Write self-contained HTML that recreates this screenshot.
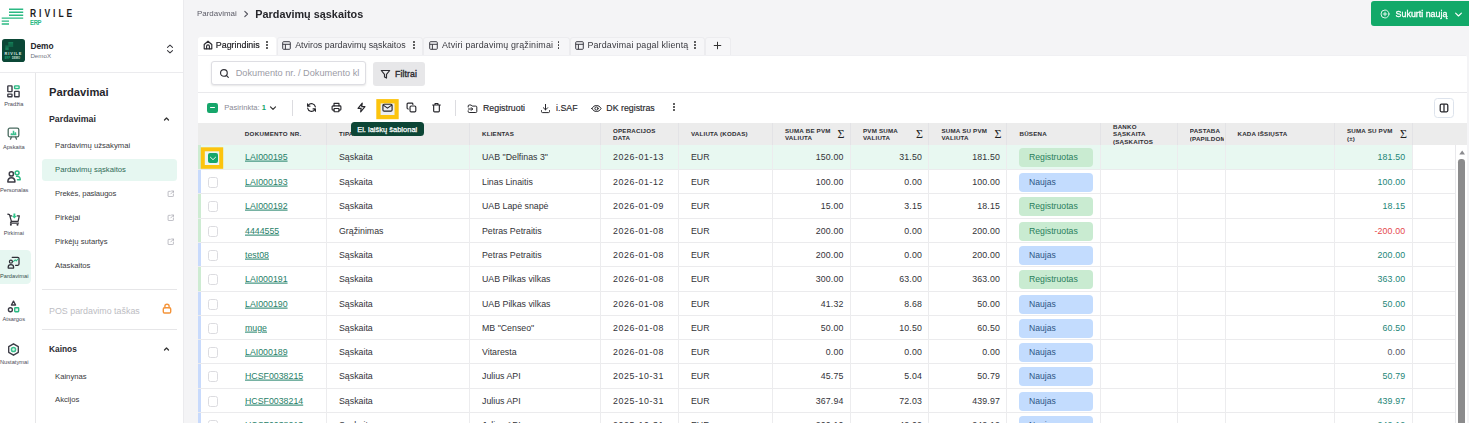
<!DOCTYPE html>
<html lang="lt"><head><meta charset="utf-8"><title>Pardavimų sąskaitos</title>
<style>
*{box-sizing:border-box}
html,body{margin:0;padding:0}
body{filter:blur(.3px);width:1469px;height:423px;overflow:hidden;position:relative;background:#f4f4f6;font-family:"Liberation Sans",sans-serif;font-size:8.9px;color:#2f2f33;line-height:1}
.abs,.left *, .top *{position:absolute}
.left{position:absolute;left:0;top:0;width:184px;height:423px;background:#fff;border-right:1px solid #ebebee}
.t{white-space:nowrap;line-height:1;transform:translateY(-50%)}
.hl{height:1px;background:#e6e6e8}
.vl{width:1px;background:#e6e6e8}
.rl{left:0;width:27.6px;text-align:center;font-size:5.7px;color:#4a4a55;white-space:nowrap;line-height:1;transform:translateY(-50%)}
.ri{left:7.3px;width:13px;height:13px}
.mi{left:55px;font-size:7.7px;color:#3a3a40}
.ext{left:166.6px;width:7.7px;height:7.7px}
.top{position:absolute;left:0;top:0;width:1469px;height:423px}
.tab{top:37px;height:18.2px;background:#f6f6f8;border:1px solid #ececef;border-bottom:none;border-radius:3px 3px 0 0}
.tab.on{background:#fff;border-color:#fff}
.tt{top:45.1px;font-size:8.9px;color:#3a3a40;white-space:nowrap;line-height:1;transform:translateY(-50%)}
.dots{width:2px;height:9px;top:41.3px}
.dots i{left:0;width:1.8px;height:1.8px;border-radius:50%;background:#333}
.panel{left:198px;top:55px;width:1268.5px;height:370px;background:#fff;border-radius:0 3px 0 0}
.tbi{top:102.4px;width:11px;height:11px;margin-left:.5px}
.tbt{top:107.8px;font-size:8.8px;color:#26262b;-webkit-text-stroke:.15px #26262b;white-space:nowrap;line-height:1;transform:translateY(-50%)}
.tbl{position:absolute;left:0;top:0;width:1469px;height:423px;overflow:hidden}
.th{position:absolute;left:198px;top:123px;width:1268.5px;height:22px;background:#ececec}
.h{position:absolute;font-size:6.2px;font-weight:bold;letter-spacing:.2px;color:#2e2e33;white-space:nowrap;line-height:6.4px;top:50%;margin-top:.4px;transform:translateY(-50%)}
.sg{position:absolute;top:50%;transform:translateY(-50%);font-family:"Liberation Serif",serif;font-size:12px;color:#222;line-height:1}
.tr{position:absolute;left:198px;width:1257.5px;border-bottom:1px solid #ebebed;background:#fff}
.tr.sel{background:linear-gradient(to right,#e8f8f1 1214px,#fff 1214px)}
.st{position:absolute;left:0;top:0;width:3px;height:100%}
.st.g{background:#cdebd2}
.st.b{background:#c8dafc}
.cb{position:absolute;left:10.5px;top:7px;width:10.5px;height:10.5px;border:1px solid #dcdce0;border-radius:2.5px;background:#fff}
.cbhl{position:absolute;left:3px;top:2px}
.cbsel{position:absolute;left:7.7px;top:5.9px;width:14.5px;height:13.8px}
.cbon{position:absolute;left:2.9px;top:1.9px;width:10.2px;height:10.2px;border-radius:2px;background:#16a66b}
.cbon svg{position:absolute;left:0;top:0}
.c{position:absolute;top:50%;transform:translateY(-50%);white-space:nowrap;line-height:1;font-size:8.8px;color:#333338;margin-top:.2px}
.lnk{left:48px;color:#1f8068;text-decoration:underline;text-underline-offset:1px;text-decoration-thickness:.7px}
.c2{left:142px}.c3{left:285px}.c4{left:416px}.c5{left:494px}
.dt{letter-spacing:.6px}
.n{text-align:right;letter-spacing:.15px}
.n1{right:612px}.n2{right:533.5px}.n3{right:455.5px}.n4{right:50.2px;color:#1c8577}
.n4.zero{color:#55555f}
.n4.neg{color:#e5484d}
.bdg{position:absolute;left:822px;top:3px;width:74px;height:18.5px;border-radius:4px;font-size:8.6px;line-height:18.8px;padding-left:10px;white-space:nowrap}
.bg{background:#c9ebd1;color:#2a805c;font-size:8.7px}
.bb{background:#c3dcfe;color:#2d5585}
.cv{position:absolute;top:145px;width:1px;height:280px;background:#ececee}
.hv{position:absolute;top:0;width:1px;height:100%;background:#e3e3e6}
.abs{position:absolute}
.tr>*:not(.st),.th>*{margin-left:-1px}

</style></head><body>
<div class="left">
<svg style="left:0;top:6px" width="26" height="22" viewBox="0 0 26 22"><g stroke="#2bb983" stroke-width="1.4" stroke-linecap="butt"><path d="M9 3.2H23.2M9 6.2H23.2M9 9.2H23.2M1.7 12.1H23.2M1.7 15.1H9M1.7 18H9"/></g></svg>
<div class="t" style="left:30.4px;top:13.5px;font-size:10px;font-weight:bold;letter-spacing:3.5px;color:#1c1c1c;transform-origin:0 50%;transform:translateY(-50%) scaleX(.85)">RIVILE</div>
<div class="t" style="left:30px;top:22.8px;font-size:6.8px;font-weight:bold;letter-spacing:-.3px;color:#2bb983;transform-origin:0 50%;transform:translateY(-50%) scaleX(.86)">ERP</div>
<div style="left:1.8px;top:39px;width:23px;height:23px;border-radius:2.8px;background:#0b4736"></div>
<svg style="left:1.8px;top:39px" width="23" height="23" viewBox="0 0 23 23"><g stroke="#188a60" stroke-width=".8"><path d="M6.300 3.500h4.900M6.300 4.700h4.900M6.300 5.900h4.900M3.300 7.100h7.900M3.300 8.300h3.400M3.300 9.500h3.400M3.300 10.500h3.400"/></g></svg>
<div class="t" style="left:4.6px;top:53.600px;font-size:3.900px;font-weight:bold;letter-spacing:.85px;color:#dcebe5">RIVILE</div>
<div class="t" style="left:4.700px;top:59px;font-size:2.600px;font-weight:bold;letter-spacing:.15px;color:#23a877">ERP <span style="position:static;color:#cfe3dc;margin-left:.6px">DEMO</span></div>
<div class="t" style="left:30.4px;top:45.6px;font-size:8.4px;font-weight:bold;color:#26262b">Demo</div>
<div class="t" style="left:30.4px;top:55.8px;font-size:6.2px;color:#6d7280">DemoX</div>
<svg style="left:165.500px;top:44.300px" width="8" height="10" viewBox="0 0 8 10"><path d="M1.500 3.300L4 1.100l2.500 2.200M1.500 6.700L4 8.900l2.500-2.200" fill="none" stroke="#3a3a40" stroke-width="1.100" stroke-linecap="round" stroke-linejoin="round"/></svg>
<div class="hl" style="left:0;top:72px;width:183px;background:#ebebee"></div>
<div class="vl" style="left:35px;top:73px;height:350px"></div>

<!-- rail -->
<div style="left:0;top:250px;width:31px;height:34px;background:#e6f7f1;border-radius:0 4.500px 4.500px 0"></div>
<svg class="ri" style="top:84.500px" viewBox="0 0 13 13"><g fill="none" stroke="#3c3c46" stroke-width="1.400"><rect x=".8" y=".9" width="4.200" height="5.700" rx=".5"/><rect x=".8" y="9.100" width="4.200" height="2.700" rx=".5"/><rect x="7.600" y="6.400" width="4.500" height="5.400" rx=".5"/><rect x="7.600" y=".9" width="4.500" height="2.700" rx=".5" stroke="#2bb983" fill="#dff5ec"/></g></svg>
<div class="rl" style="top:105.0px">Pradžia</div>
<svg class="ri" style="top:126.5px" viewBox="0 0 13 13"><g fill="none" stroke="#4a6b60" stroke-width="1.3" stroke-linecap="round"><rect x="1.200" y="1.200" width="10.600" height="8.600" rx="1.600"/><path d="M4.300 10.200L3.500 12.200M8.700 10.200l.8 2"/></g><path d="M3.600 7.600h5.800M4.600 7.400V6.200M6.500 7.400V3.800M8.400 7.400V5.200" fill="none" stroke="#3cc08e" stroke-width="1.500" stroke-linecap="butt"/></svg>
<div class="rl" style="top:147.8px">Apskaita</div>
<svg style="left:6.800px;top:170.300px" width="14" height="13" viewBox="0 0 14 13"><g fill="none" stroke-width="1.500" stroke-linecap="round"><circle cx="4.350" cy="3.950" r="2.100" stroke="#3c3c46"/><path d="M.85 12.050c0-2.800 1.400-4.300 3.550-4.300s3.550 1.500 3.550 4.300z" stroke="#3c3c46" stroke-linejoin="round"/><circle cx="10.100" cy="2.850" r="1.950" stroke="#2bb983"/><path d="M9.600 6.350c2.300-.3 3.600 1 3.600 3.300h-2.700" stroke="#2bb983" stroke-linejoin="round"/></g></svg>
<div class="rl" style="top:190.6px">Personalas</div>
<svg class="ri" style="top:213px" viewBox="0 0 13 13"><g fill="none" stroke="#34343c" stroke-width="1.250" stroke-linecap="round" stroke-linejoin="round"><path d="M.8 1.100L2.500 1.700 4.400 8.300h6.700l1.200-5.400H10.200M4.700 2.900H2.900"/><path d="M4.400 8.300L3.500 10.100h8"/></g><circle cx="3.900" cy="11.850" r="1" fill="#34343c"/><circle cx="10.500" cy="11.850" r="1" fill="#34343c"/><path d="M6.450 .5h1.900v2.400h1.400L7.400 5.600 5.050 2.900h1.400z" fill="#2fc78b"/></svg>
<div class="rl" style="top:233.8px">Pirkimai</div>
<svg class="ri" style="top:256.2px" viewBox="0 0 13 13"><g fill="none" stroke="#2e2e36" stroke-width="1.25" stroke-linecap="round" stroke-linejoin="round"><path d="M5.2 1.3h5.6a1.2 1.2 0 0 1 1.200 1.2v5.600a1.2 1.2 0 0 1-1.200 1.200H8.600"/><circle cx="3.9" cy="5.700" r="1.500"/><path d="M1.2 12v-1.100c0-1.400 1.100-2.300 2.700-2.300s2.700.900 2.700 2.300V12z"/></g><path d="M6.600 5.400l1.600-1.600 1.100 1.100 1.700-1.900" fill="none" stroke="#2bb983" stroke-width="1.1" stroke-linecap="round" stroke-linejoin="round"/></svg>
<div class="rl" style="top:277.0px;color:#35504a">Pardavimai</div>
<svg class="ri" style="top:299.6px" viewBox="0 0 13 13"><g fill="none" stroke-width="1.350" stroke-linejoin="round"><path d="M6.500 1.200L8.600 5H4.400z" stroke="#3c3c46"/><circle cx="3.400" cy="9.700" r="2" stroke="#3c3c46"/><rect x="7.700" y="7.700" width="4" height="4" rx=".6" stroke="#2bb983" fill="#dff5ec"/></g></svg>
<div class="rl" style="top:320.0px">Atsargos</div>
<svg class="ri" style="top:342.500px" viewBox="0 0 13 13"><path d="M6.500 .95L11.300 3.700V9.300L6.500 12.050 1.700 9.300V3.700z" fill="none" stroke="#3c3c46" stroke-width="1.350" stroke-linejoin="round"/><path d="M6.500 .6L7.600 1.500H5.400zM6.500 12.400L7.600 11.500H5.400z" fill="#3c3c46"/><circle cx="6.500" cy="6.500" r="2.100" fill="#dff5ec" stroke="#3cc08e" stroke-width="1.500"/></svg>
<div class="rl" style="top:363.4px">Nustatymai</div>

<!-- menu -->
<div class="t" style="left:49px;top:93px;font-size:11.2px;font-weight:bold;color:#26262b">Pardavimai</div>
<div class="t" style="left:49px;top:119.3px;font-size:8.8px;font-weight:bold;color:#2c2c31">Pardavimai</div>
<svg style="left:162.600px;top:115.700px" width="7" height="6" viewBox="0 0 7 6"><path d="M1.500 4L3.500 2l2 2" fill="none" stroke="#333" stroke-width="1.250" stroke-linecap="round" stroke-linejoin="round"/></svg>
<div style="left:42px;top:159px;width:135px;height:21.5px;background:#e6f7f1;border-radius:3.5px"></div>
<div class="t mi" style="top:145.8px">Pardavimų užsakymai</div>
<div class="t mi" style="top:169.8px;color:#2f6b57">Pardavimų sąskaitos</div>
<div class="t mi" style="top:194.1px;letter-spacing:-.12px">Prekės, paslaugos</div>
<div class="t mi" style="top:218.2px">Pirkėjai</div>
<div class="t mi" style="top:241.6px">Pirkėjų sutartys</div>
<div class="t mi" style="top:265.5px">Ataskaitos</div>
<svg class="ext" style="top:189.8px" viewBox="0 0 7 7"><path d="M3 1.200H1.600a.6.6 0 0 0-.6.600v3.600a.6.6 0 0 0 .600.600h3.600a.6.6 0 0 0 .600-.6V4M4.200.9h1.900v1.900M6 1L3.400 3.600" fill="none" stroke="#a9a9b2" stroke-width=".7" stroke-linecap="round" stroke-linejoin="round"/></svg>
<svg class="ext" style="top:213.8px" viewBox="0 0 7 7"><path d="M3 1.200H1.600a.6.6 0 0 0-.6.600v3.600a.6.6 0 0 0 .600.600h3.600a.6.6 0 0 0 .600-.6V4M4.200.9h1.900v1.900M6 1L3.400 3.600" fill="none" stroke="#a9a9b2" stroke-width=".7" stroke-linecap="round" stroke-linejoin="round"/></svg>
<svg class="ext" style="top:237.6px" viewBox="0 0 7 7"><path d="M3 1.200H1.600a.6.6 0 0 0-.6.600v3.600a.6.6 0 0 0 .600.600h3.600a.6.6 0 0 0 .600-.6V4M4.200.9h1.900v1.900M6 1L3.400 3.600" fill="none" stroke="#a9a9b2" stroke-width=".7" stroke-linecap="round" stroke-linejoin="round"/></svg>
<div class="hl" style="left:42px;top:289.4px;width:135px"></div>
<div class="t" style="left:49px;top:311.2px;font-size:8.9px;color:#bdbdc3">POS pardavimo taškas</div>
<svg style="left:162.200px;top:303px" width="10" height="11" viewBox="0 0 10 11"><g fill="none" stroke="#f4943a" stroke-width="1.400" stroke-linecap="round"><rect x="1.300" y="4.800" width="7.400" height="5.200" rx="1.200"/><path d="M2.900 4.700V3.300a2.100 2.100 0 0 1 4.200 0v1.400"/></g></svg>
<div class="hl" style="left:42px;top:329px;width:135px"></div>
<div class="t" style="left:49px;top:348.8px;font-size:8.35px;font-weight:bold;color:#2c2c31">Kainos</div>
<svg style="left:162.600px;top:345.700px" width="7" height="6" viewBox="0 0 7 6"><path d="M1.500 4L3.500 2l2 2" fill="none" stroke="#333" stroke-width="1.250" stroke-linecap="round" stroke-linejoin="round"/></svg>
<div class="t mi" style="top:376.8px">Kainynas</div>
<div class="t mi" style="top:400.2px">Akcijos</div>
</div>
<div class="top">
<div class="t" style="left:197px;top:13.6px;font-size:7.950px;color:#5b5b66">Pardavimai</div>
<svg style="left:242.700px;top:9.800px" width="6" height="8" viewBox="0 0 6 8"><path d="M1.800 1.300L4.500 4 1.800 6.700" fill="none" stroke="#55555f" stroke-width="1.150" stroke-linecap="round" stroke-linejoin="round"/></svg>
<div class="t" style="left:255.3px;top:13.6px;font-size:10.85px;font-weight:bold;color:#26262b">Pardavimų sąskaitos</div>

<div style="left:1370.5px;top:1.2px;width:110px;height:24.5px;border-radius:3px;background:#12a969"></div>
<svg style="left:1380px;top:8.800px" width="10" height="10" viewBox="0 0 10 10"><g fill="none" stroke="#fff" stroke-width=".85" stroke-linecap="round"><circle cx="5" cy="5" r="4"/><path d="M5 3.200v3.600M3.200 5h3.600"/></g></svg>
<div class="t" style="left:1395.6px;top:13.6px;font-size:8.9px;color:#fff;-webkit-text-stroke:.3px #fff">Sukurti naują</div>
<svg style="left:1454px;top:10.800px" width="9" height="7" viewBox="0 0 9 7"><path d="M1.600 2.100L4.500 5l2.900-2.900" fill="none" stroke="#fff" stroke-width="1.100" stroke-linecap="round" stroke-linejoin="round"/></svg>

<!-- tabs -->
<div class="tab on" style="left:198px;width:78px"></div>
<div class="tab" style="left:276.5px;width:146px"></div>
<div class="tab" style="left:423px;width:146.500px"></div>
<div class="tab" style="left:569.500px;width:135px"></div>
<div class="tab" style="left:705px;width:25.500px"></div>
<div class="panel"></div><div class="hl" style="left:198px;top:54.500px;width:1268px;background:#f0f0f3"></div>
<svg style="left:203px;top:40.400px" width="10" height="10" viewBox="0 0 10 10"><g fill="none" stroke="#2a2a30" stroke-width="1.150" stroke-linejoin="round" stroke-linecap="round"><path d="M1.200 4.500L5 1.200l3.800 3.300V8.800H1.200z"/><path d="M3.600 8.700V6.300a1.400 1.400 0 0 1 2.800 0v2.400"/></g></svg>
<div class="tt" style="left:215.8px;color:#1f1f24;-webkit-text-stroke:.2px #1f1f24">Pagrindinis</div>
<div class="dots" style="left:265.800px"><i style="top:0"></i><i style="top:3.100px"></i><i style="top:6.200px"></i></div>
<svg style="left:282.200px;top:40.800px" width="9" height="9" viewBox="0 0 9 9"><g fill="none" stroke="#34343c" stroke-width=".95"><rect x=".7" y=".7" width="7.600" height="7.600" rx=".9"/><path d="M.7 3.300h7.600M3.400 3.300V8.300"/></g></svg>
<div class="tt" style="left:295.2px">Atviros pardavimų sąskaitos</div>
<div class="dots" style="left:412.800px"><i style="top:0"></i><i style="top:3.100px"></i><i style="top:6.200px"></i></div>
<svg style="left:429.200px;top:40.800px" width="9" height="9" viewBox="0 0 9 9"><g fill="none" stroke="#34343c" stroke-width=".95"><rect x=".7" y=".7" width="7.600" height="7.600" rx=".9"/><path d="M.7 3.300h7.600M3.400 3.300V8.300"/></g></svg>
<div class="tt" style="left:442px;letter-spacing:.17px">Atviri pardavimų grąžinimai</div>
<div class="dots" style="left:557.700px"><i style="top:0"></i><i style="top:3.100px"></i><i style="top:6.200px"></i></div>
<svg style="left:575.400px;top:40.800px" width="9" height="9" viewBox="0 0 9 9"><g fill="none" stroke="#34343c" stroke-width=".95"><rect x=".7" y=".7" width="7.600" height="7.600" rx=".9"/><path d="M.7 3.300h7.600M3.400 3.300V8.300"/></g></svg>
<div class="tt" style="left:587.400px;letter-spacing:.18px">Pardavimai pagal klientą</div>
<div class="dots" style="left:694px"><i style="top:0"></i><i style="top:3.100px"></i><i style="top:6.200px"></i></div>
<svg style="left:713.200px;top:40.600px" width="9" height="9" viewBox="0 0 9 9"><path d="M4.500 1.200v6.600M1.200 4.500h6.600" fill="none" stroke="#333" stroke-width="1" stroke-linecap="round"/></svg>

<!-- search -->
<div style="left:210.8px;top:61.200px;width:155.4px;height:24px;background:#fff;border:1px solid #dedee3;border-radius:3px;box-shadow:0 1px 2px rgba(0,0,0,.10)"></div>
<svg style="left:219.3px;top:68.300px" width="11" height="11" viewBox="0 0 11 11"><g fill="none" stroke="#2f2f36" stroke-width="1.15" stroke-linecap="round"><circle cx="4.900" cy="4.900" r="3.350"/><path d="M7.400 7.400L9.300 9.300"/></g></svg>
<div class="t" style="left:235.700px;top:73.900px;font-size:9.2px;color:#9c9ca6">Dokumento nr. / Dokumento kl</div>
<div style="left:372.500px;top:61.500px;width:52.200px;height:24.200px;background:#e7e7e9;border-radius:3px"></div>
<svg style="left:380px;top:68.500px" width="11" height="11" viewBox="0 0 11 11"><path d="M1.300 1.500h8.400L6.500 5.400v3.700L4.500 8V5.400z" fill="none" stroke="#2a2a30" stroke-width="1.150" stroke-linejoin="round"/></svg>
<div class="t" style="left:395px;top:73.700px;font-size:8.700px;color:#2a2a30;-webkit-text-stroke:.35px #2a2a30;letter-spacing:.1px">Filtrai</div>
<div class="hl" style="left:198px;top:92px;width:1268.5px;background:#e9e9ec"></div>

<!-- toolbar -->
<div style="left:207.400px;top:102.700px;width:10.500px;height:10.500px;border-radius:2.200px;background:#16a66b"></div>
<div style="left:210.200px;top:107.400px;width:4.900px;height:1.100px;background:#fff;border-radius:1px"></div>
<div class="t" style="left:224.200px;top:108.300px;font-size:7.600px;color:#8a8a95">Pasirinkta: <b style="position:static;color:#16a66b">1</b></div>
<svg style="left:268.800px;top:105px" width="8" height="6" viewBox="0 0 8 6"><path d="M1.500 1.800L4 4.300l2.500-2.500" fill="none" stroke="#333" stroke-width="1.200" stroke-linecap="round" stroke-linejoin="round"/></svg>
<div class="vl" style="left:291.500px;top:100px;height:15.500px;background:#dcdce0"></div>
<svg class="tbi" style="left:305.800px" viewBox="0 0 12 12"><g fill="none" stroke="#26262b" stroke-width="1.250" stroke-linecap="round" stroke-linejoin="round"><path d="M10.200 5.300A4.300 4.300 0 0 0 2.600 3.400L1.700 4.400M1.700 1.900v2.600h2.600"/><path d="M1.800 6.700a4.300 4.300 0 0 0 7.600 1.900l.9-1M10.300 10.100V7.500H7.700"/></g></svg>
<svg class="tbi" style="left:330.600px" viewBox="0 0 12 12"><g fill="none" stroke="#26262b" stroke-width="1.250" stroke-linecap="round" stroke-linejoin="round"><path d="M3.300 4.300V1.500h5.400v2.800"/><path d="M3.300 8.900H2.200a1 1 0 0 1-1-1V5.300a1 1 0 0 1 1-1h7.600a1 1 0 0 1 1 1v2.600a1 1 0 0 1-1 1H8.700"/><rect x="3.300" y="7.100" width="5.400" height="3.500" rx=".5"/></g></svg>
<svg class="tbi" style="left:355.900px" viewBox="0 0 12 12"><path d="M6.800 1.300L2.200 6.900h3.400l-.5 3.800 4.700-5.600H6.300z" fill="none" stroke="#26262b" stroke-width="1.250" stroke-linejoin="round"/></svg>
<svg style="left:376px;top:99px" width="23" height="21" viewBox="0 0 23 21"><rect x=".3" y=".1" width="22.400" height="20.100" fill="#fcc40e"/><rect x="4.600" y="4.400" width="13.900" height="11.600" fill="#eceef3"/></svg>
<svg class="tbi" style="left:381.100px;top:102.300px" viewBox="0 0 12 12"><g fill="none" stroke="#26262b" stroke-width="1.250" stroke-linejoin="round" stroke-linecap="round"><rect x="1" y="2.500" width="10" height="7.400" rx="1.300"/><path d="M1.400 3.400L6 6.700l4.600-3.300"/></g></svg>
<svg class="tbi" style="left:405.800px" viewBox="0 0 12 12"><g fill="none" stroke="#26262b" stroke-width="1.250" stroke-linejoin="round" stroke-linecap="round"><rect x="4.400" y="4.400" width="6.300" height="6.300" rx="1.200"/><path d="M2.500 7.600H2.200a1 1 0 0 1-1-1V2.300a1 1 0 0 1 1-1h4.300a1 1 0 0 1 1 1v.3"/></g></svg>
<svg class="tbi" style="left:430.600px" viewBox="0 0 12 12"><g fill="none" stroke="#26262b" stroke-width="1.250" stroke-linejoin="round" stroke-linecap="round"><path d="M1.800 3.300h8.400M4.400 3.200V1.600h3.200v1.600M2.900 3.400v6.400a1 1 0 0 0 1 1h4.200a1 1 0 0 0 1-1V3.400"/></g></svg>
<div class="vl" style="left:454.500px;top:100px;height:15.500px;background:#dcdce0"></div>
<svg style="left:467px;top:102.500px" width="11" height="11" viewBox="0 0 11 11"><g fill="none" stroke="#26262b" stroke-width="1" stroke-linejoin="round" stroke-linecap="round"><path d="M1.200 4V3a1 1 0 0 1 1-1h2l1 1.100h3.600a1 1 0 0 1 1 1V8.500a1 1 0 0 1-1 1H2.200a1 1 0 0 1-1-1V7.800"/><path d="M1.400 6h4.200M4.300 4.600L5.700 6 4.300 7.400"/></g></svg>
<div class="tbt" style="left:483px">Registruoti</div>
<svg style="left:540px;top:102.500px" width="11" height="11" viewBox="0 0 11 11"><g fill="none" stroke="#26262b" stroke-width="1" stroke-linejoin="round" stroke-linecap="round"><path d="M5.500 1.400v5.400M3.300 4.700l2.200 2.200 2.200-2.200M1.500 7.600v1a1 1 0 0 0 1 1h6a1 1 0 0 0 1-1v-1"/></g></svg>
<div class="tbt" style="left:556px">i.SAF</div>
<svg style="left:590.500px;top:102.500px" width="11" height="11" viewBox="0 0 11 11"><g fill="none" stroke="#26262b" stroke-width="1" stroke-linejoin="round" stroke-linecap="round"><path d="M.9 5.500C2 3.500 3.600 2.500 5.500 2.500s3.500 1 4.600 3c-1.100 2-2.700 3-4.600 3S2 7.500.9 5.500z"/><circle cx="5.500" cy="5.500" r="1.600"/></g></svg>
<div class="tbt" style="left:606.300px">DK registras</div>
<div class="dots" style="left:672.800px;top:103.300px"><i style="top:0"></i><i style="top:3.100px"></i><i style="top:6.200px"></i></div>
<div style="left:1433.5px;top:97.800px;width:20px;height:20px;border:1px solid #dde3ec;border-radius:3.5px;background:#fff"></div>
<svg style="left:1438.500px;top:102.800px" width="10" height="10" viewBox="0 0 10 10"><g fill="none" stroke="#26262b" stroke-width="1.25"><rect x="1.200" y="1.200" width="7.600" height="7.600" rx="1.200"/><path d="M5 1.200v7.600"/></g></svg>
</div>
<div class="tbl">
<div class="th">
<span class="h" style="left:47.800px;letter-spacing:.3px">DOKUMENTO NR.</span>
<span class="h" style="left:142px">TIPAS</span>
<span class="h" style="left:285px">KLIENTAS</span>
<span class="h" style="left:416px">OPERACIJOS<br>DATA</span>
<span class="h" style="left:494px">VALIUTA (KODAS)</span>
<span class="h" style="left:588px">SUMA BE PVM<br>VALIUTA</span><span class="sg" style="left:640.500px">Σ</span>
<span class="h" style="left:666px">PVM SUMA<br>VALIUTA</span><span class="sg" style="left:719px">Σ</span>
<span class="h" style="left:744.500px">SUMA SU PVM<br>VALIUTA</span><span class="sg" style="left:797.500px">Σ</span>
<span class="h" style="left:822.500px">BŪSENA</span>
<span class="h" style="left:916px;line-height:7.1px">BANKO<br>SĄSKAITA<br>(SĄSKAITOS</span>
<span class="h" style="left:992.8px;width:34.500px;overflow:hidden;line-height:7.4px">PASTABA<br>(PAPILDOMA</span>
<span class="h" style="left:1040.500px">KADA IŠSIŲSTA</span>
<span class="h" style="left:1150px;line-height:7.4px">SUMA SU PVM<br>(±)</span><span class="sg" style="left:1203px">Σ</span>
<i class="hv" style="left:129px"></i><i class="hv" style="left:272.400px"></i><i class="hv" style="left:403.300px"></i><i class="hv" style="left:481px"></i><i class="hv" style="left:574.500px"></i><i class="hv" style="left:653px"></i><i class="hv" style="left:731px"></i><i class="hv" style="left:809px"></i><i class="hv" style="left:903px"></i><i class="hv" style="left:980px"></i><i class="hv" style="left:1028px"></i><i class="hv" style="left:1137px"></i><i class="hv" style="left:1214.800px"></i>
</div>
<div class="tr sel" style="top:145px;height:25px"><i class="st g"></i><svg class="cbhl" width="24" height="23" viewBox="0 0 24 23"><rect x=".8" y=".3" width="22.400" height="21.500" fill="#fcc40e"/><rect x="4.800" y="4.300" width="14.400" height="13.700" fill="#eef5f3"/></svg><span class="cbsel"><span class="cbon"><svg viewBox="0 0 10 10" width="10" height="10"><path d="M2.4 4.2 L5 6.7 L7.6 4.2" fill="none" stroke="#fff" stroke-width=".9" stroke-linecap="round" stroke-linejoin="round"/></svg></span></span><a class="c lnk">LAI000195</a><span class="c c2">Sąskaita</span><span class="c c3">UAB "Delfinas 3"</span><span class="c c4 dt">2026-01-13</span><span class="c c5">EUR</span><span class="c n n1">150.00</span><span class="c n n2">31.50</span><span class="c n n3">181.50</span><span class="bdg bg">Registruotas</span><span class="c n n4">181.50</span></div>
<div class="tr" style="top:170px;height:24px"><i class="st b"></i><span class="cb"></span><a class="c lnk">LAI000193</a><span class="c c2">Sąskaita</span><span class="c c3">Linas Linaitis</span><span class="c c4 dt">2026-01-12</span><span class="c c5">EUR</span><span class="c n n1">100.00</span><span class="c n n2">0.00</span><span class="c n n3">100.00</span><span class="bdg bb">Naujas</span><span class="c n n4">100.00</span></div>
<div class="tr" style="top:194px;height:25px"><i class="st g"></i><span class="cb"></span><a class="c lnk">LAI000192</a><span class="c c2">Sąskaita</span><span class="c c3">UAB Lapė snapė</span><span class="c c4 dt">2026-01-09</span><span class="c c5">EUR</span><span class="c n n1">15.00</span><span class="c n n2">3.15</span><span class="c n n3">18.15</span><span class="bdg bg">Registruotas</span><span class="c n n4">18.15</span></div>
<div class="tr" style="top:219px;height:24px"><i class="st g"></i><span class="cb"></span><a class="c lnk">4444555</a><span class="c c2">Grąžinimas</span><span class="c c3">Petras Petraitis</span><span class="c c4 dt">2026-01-08</span><span class="c c5">EUR</span><span class="c n n1">200.00</span><span class="c n n2">0.00</span><span class="c n n3">200.00</span><span class="bdg bg">Registruotas</span><span class="c n n4 neg">-200.00</span></div>
<div class="tr" style="top:243px;height:24px"><i class="st b"></i><span class="cb"></span><a class="c lnk">test08</a><span class="c c2">Sąskaita</span><span class="c c3">Petras Petraitis</span><span class="c c4 dt">2026-01-08</span><span class="c c5">EUR</span><span class="c n n1">200.00</span><span class="c n n2">0.00</span><span class="c n n3">200.00</span><span class="bdg bb">Naujas</span><span class="c n n4">200.00</span></div>
<div class="tr" style="top:267px;height:25px"><i class="st g"></i><span class="cb"></span><a class="c lnk">LAI000191</a><span class="c c2">Sąskaita</span><span class="c c3">UAB Pilkas vilkas</span><span class="c c4 dt">2026-01-08</span><span class="c c5">EUR</span><span class="c n n1">300.00</span><span class="c n n2">63.00</span><span class="c n n3">363.00</span><span class="bdg bg">Registruotas</span><span class="c n n4">363.00</span></div>
<div class="tr" style="top:292px;height:24px"><i class="st b"></i><span class="cb"></span><a class="c lnk">LAI000190</a><span class="c c2">Sąskaita</span><span class="c c3">UAB Pilkas vilkas</span><span class="c c4 dt">2026-01-08</span><span class="c c5">EUR</span><span class="c n n1">41.32</span><span class="c n n2">8.68</span><span class="c n n3">50.00</span><span class="bdg bb">Naujas</span><span class="c n n4">50.00</span></div>
<div class="tr" style="top:316px;height:24px"><i class="st b"></i><span class="cb"></span><a class="c lnk">muge</a><span class="c c2">Sąskaita</span><span class="c c3">MB "Censeo"</span><span class="c c4 dt">2026-01-08</span><span class="c c5">EUR</span><span class="c n n1">50.00</span><span class="c n n2">10.50</span><span class="c n n3">60.50</span><span class="bdg bb">Naujas</span><span class="c n n4">60.50</span></div>
<div class="tr" style="top:340px;height:24px"><i class="st b"></i><span class="cb"></span><a class="c lnk">LAI000189</a><span class="c c2">Sąskaita</span><span class="c c3">Vitaresta</span><span class="c c4 dt">2026-01-08</span><span class="c c5">EUR</span><span class="c n n1">0.00</span><span class="c n n2">0.00</span><span class="c n n3">0.00</span><span class="bdg bb">Naujas</span><span class="c n n4 zero">0.00</span></div>
<div class="tr" style="top:364px;height:25px"><i class="st b"></i><span class="cb"></span><a class="c lnk">HCSF0038215</a><span class="c c2">Sąskaita</span><span class="c c3">Julius API</span><span class="c c4 dt">2025-10-31</span><span class="c c5">EUR</span><span class="c n n1">45.75</span><span class="c n n2">5.04</span><span class="c n n3">50.79</span><span class="bdg bb">Naujas</span><span class="c n n4">50.79</span></div>
<div class="tr" style="top:389px;height:24px"><i class="st b"></i><span class="cb"></span><a class="c lnk">HCSF0038214</a><span class="c c2">Sąskaita</span><span class="c c3">Julius API</span><span class="c c4 dt">2025-10-31</span><span class="c c5">EUR</span><span class="c n n1">367.94</span><span class="c n n2">72.03</span><span class="c n n3">439.97</span><span class="bdg bb">Naujas</span><span class="c n n4">439.97</span></div>
<div class="tr" style="top:413px;height:24px"><i class="st b"></i><span class="cb"></span><a class="c lnk">HCSF0038213</a><span class="c c2">Sąskaita</span><span class="c c3">Julius API</span><span class="c c4 dt">2025-10-31</span><span class="c c5">EUR</span><span class="c n n1">200.10</span><span class="c n n2">42.02</span><span class="c n n3">242.12</span><span class="bdg bb">Naujas</span><span class="c n n4">242.12</span></div>
<i class="cv" style="left:326px"></i><i class="cv" style="left:469.400px"></i><i class="cv" style="left:600.300px"></i><i class="cv" style="left:678px"></i><i class="cv" style="left:771.500px"></i><i class="cv" style="left:850px"></i><i class="cv" style="left:928px"></i><i class="cv" style="left:1006px"></i><i class="cv" style="left:1100px"></i><i class="cv" style="left:1177px"></i><i class="cv" style="left:1225px"></i><i class="cv" style="left:1334px"></i><i class="cv" style="left:1411.800px"></i>
</div>
<i class="abs" style="left:1455.300px;top:145px;width:1px;height:280px;background:#e9e9ec"></i>
<div class="abs" style="left:1458.300px;top:158.600px;width:6.400px;height:280px;border-radius:3.200px;background:#8b8b8c"></div>
<svg class="abs" style="left:1458.500px;top:149.500px" width="6.400" height="5" viewBox="0 0 6.400 5"><path d="M.3 4.600L3.200.5l2.900 4.100z" fill="#8b8b8f"/></svg>
<div class="abs" style="left:350.600px;top:121.500px;width:73.2px;height:14.8px;border-radius:3.500px;background:#0d4636"></div>
<div class="abs t" style="left:357.200px;top:129.800px;font-size:7.500px;color:#fff;-webkit-text-stroke:.25px #fff">El. laiškų šablonai</div>
</body></html>
